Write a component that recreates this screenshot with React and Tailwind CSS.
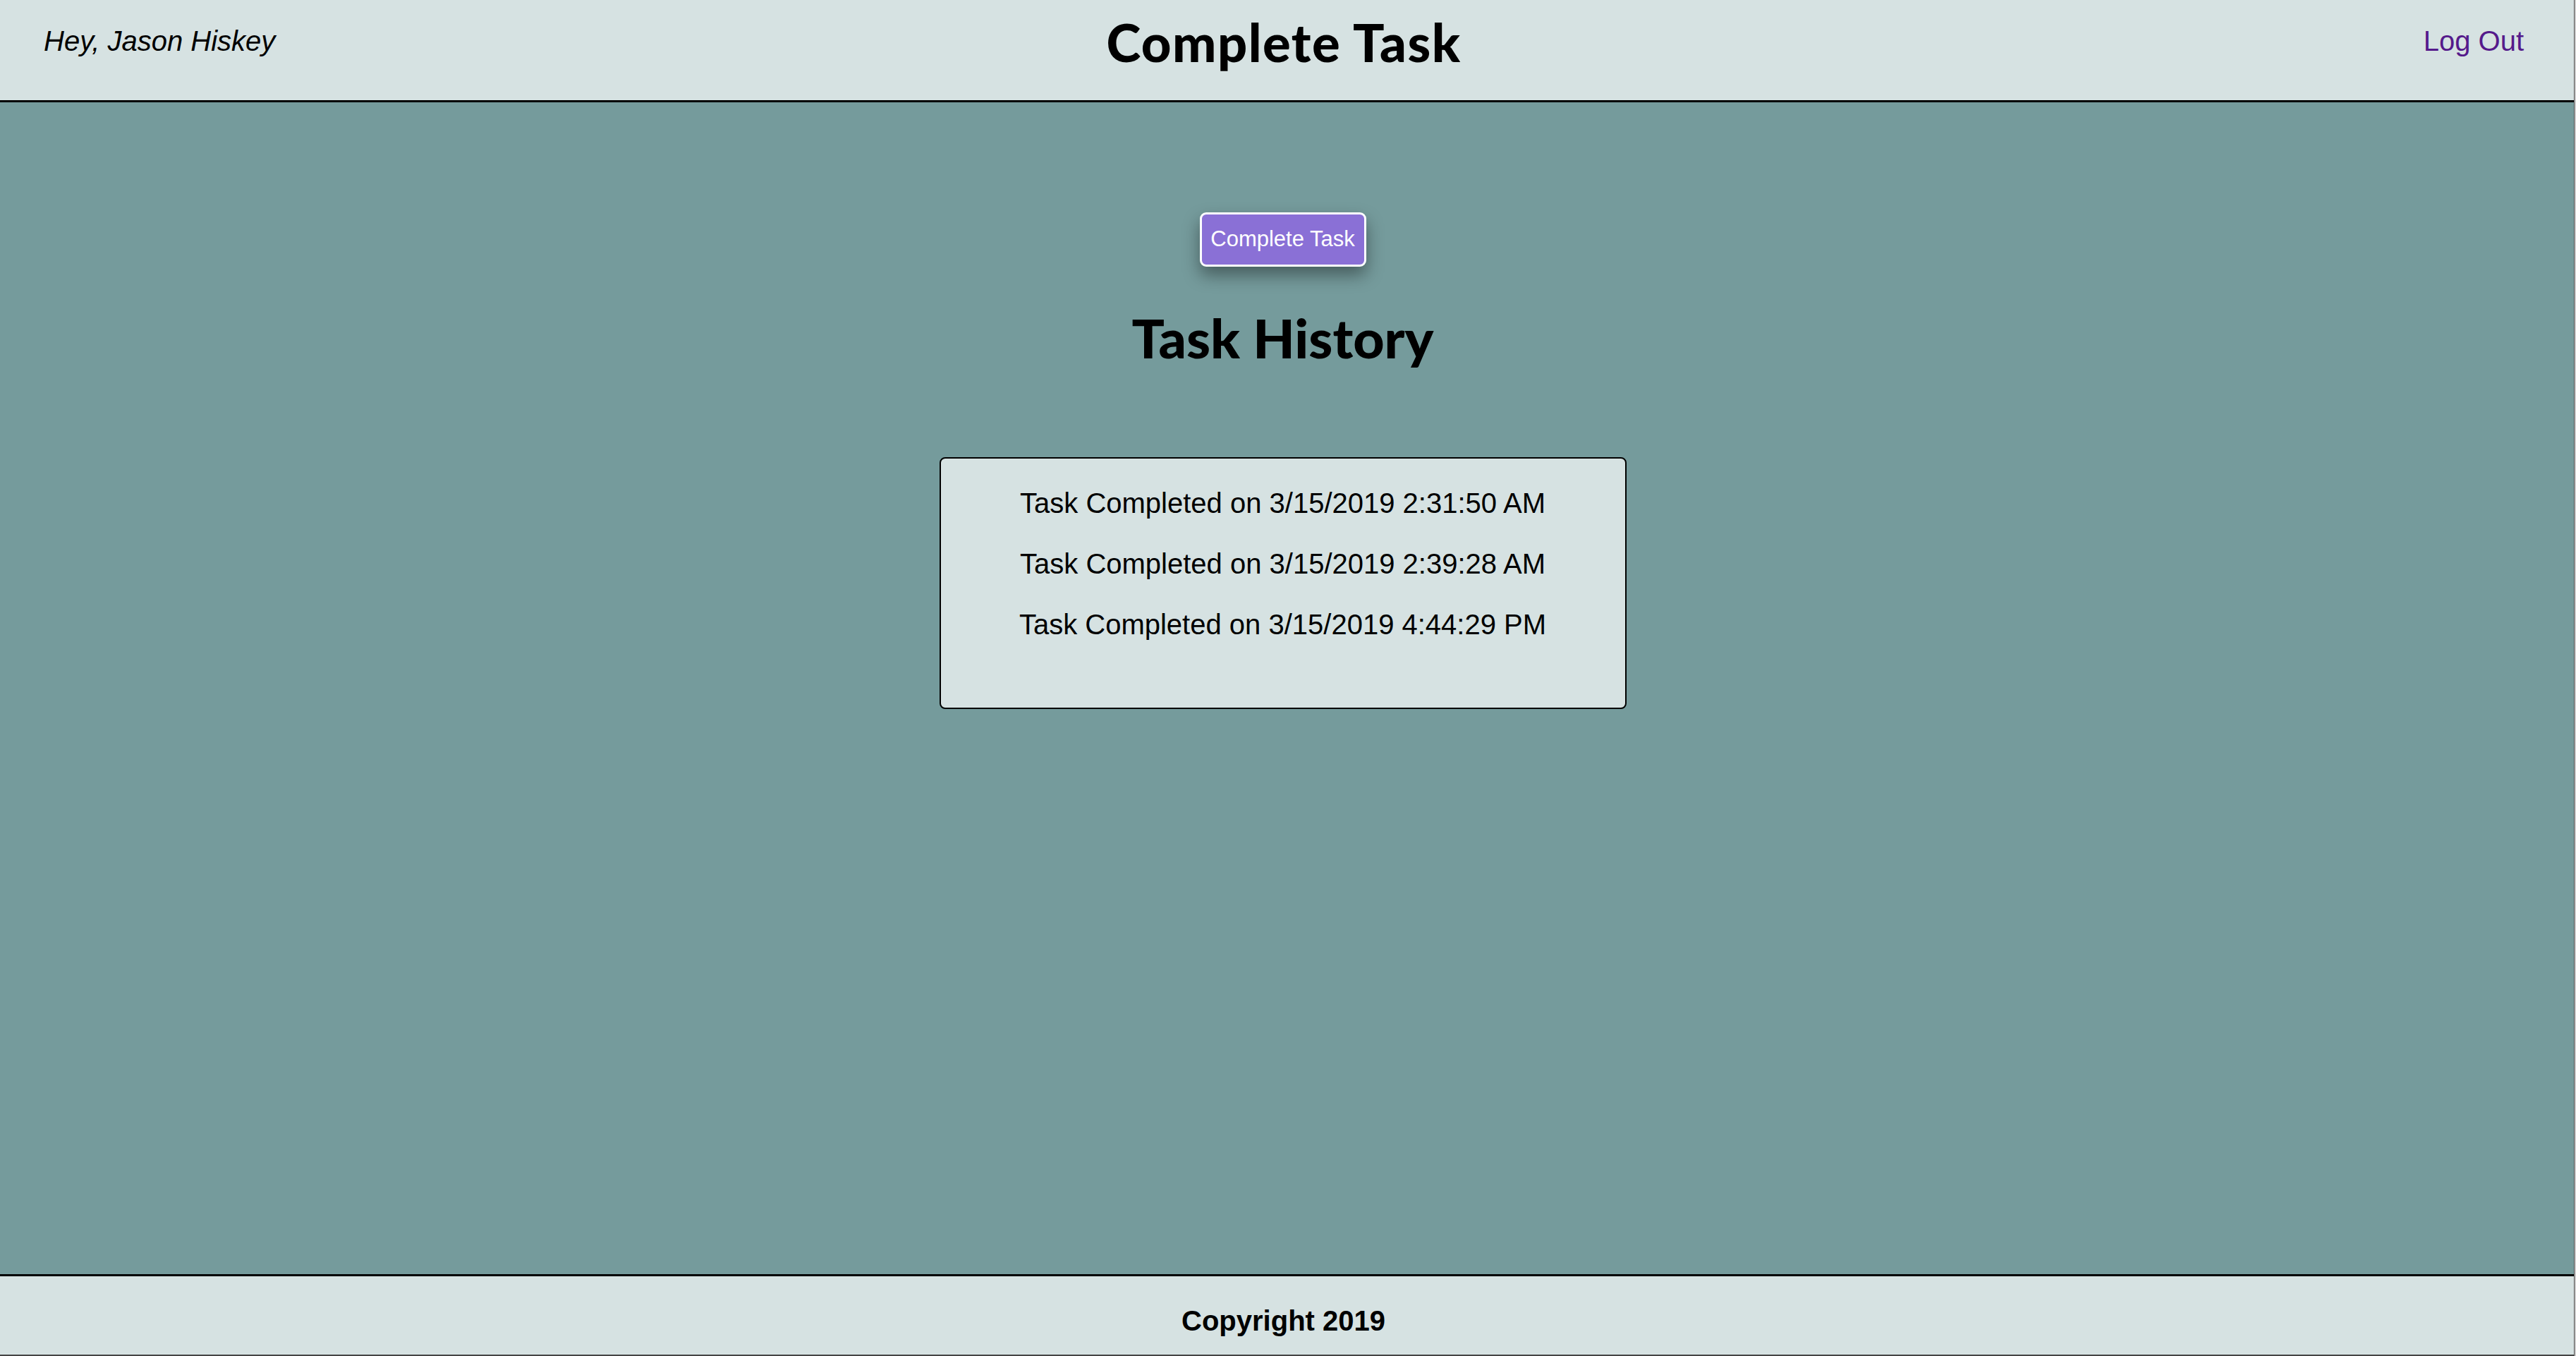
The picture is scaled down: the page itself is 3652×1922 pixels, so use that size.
import React from 'react';

const history = [
  '3/15/2019 2:31:50 AM',
  '3/15/2019 2:39:28 AM',
  '3/15/2019 4:44:29 PM',
];

const arial = "font-['Liberation_Sans',Arial,sans-serif]";
const display = "font-['Lato','Noto_Sans',sans-serif]";

export default function App() {
  return (
    <div className="flex h-screen w-full bg-[#c9c9c9]">
      <div className="flex flex-1 flex-col border-b-2 border-[#444]">
        {/* header */}
        <header className="grid h-[145px] shrink-0 grid-cols-[1fr_auto_1fr] border-b-[3px] border-black bg-[#d6e2e2] pl-[62px] pr-[71px]">
          <div className={`${arial} pt-[35px] text-[40px] leading-[46px] italic text-black`}>Hey, Jason Hiskey</div>
          <h1 className={`${display} pt-[20px] text-[74px] leading-[80px] font-black tracking-[1.5px] text-black`}>Complete Task</h1>
          <div className="flex justify-end pt-[35px]">
            <a href="#" className={`${arial} text-[40px] leading-[46px] text-[#551a8b]`}>Log Out</a>
          </div>
        </header>

        {/* main */}
        <main className="flex flex-1 flex-col items-center bg-[#759b9c] pt-[156px] pr-[12px]">
          <button className={`${arial} h-[77px] w-[236px] rounded-[9px] border-[3px] border-white bg-[#8a70d6] text-[31px] text-white shadow-[0_12px_24px_rgba(0,0,0,0.4)]`}>
            Complete Task
          </button>
          <h2 className={`${display} mt-[55px] text-[77px] leading-[90px] font-black text-black`}>Task History</h2>
          <div className="mt-[125px] flex h-[357px] w-[974px] flex-col items-center rounded-[8px] border-2 border-black bg-[#d6e2e2] pt-[20px]">
            {history.map((d) => (
              <p key={d} className={`${arial} text-[40px] leading-[86px] text-black`}>Task Completed on {d}</p>
            ))}
          </div>
        </main>

        {/* footer */}
        <footer className="h-[114px] shrink-0 border-t-[3px] border-black bg-[#d6e2e2] pr-[10px] pt-[40px] text-center">
          <p className={`${arial} text-[40px] leading-[46px] font-bold text-black`}>Copyright 2019</p>
        </footer>
      </div>
      <div className="w-[3px] shrink-0 border-l border-[#555] bg-[#c9c9c9]" />
    </div>
  );
}
